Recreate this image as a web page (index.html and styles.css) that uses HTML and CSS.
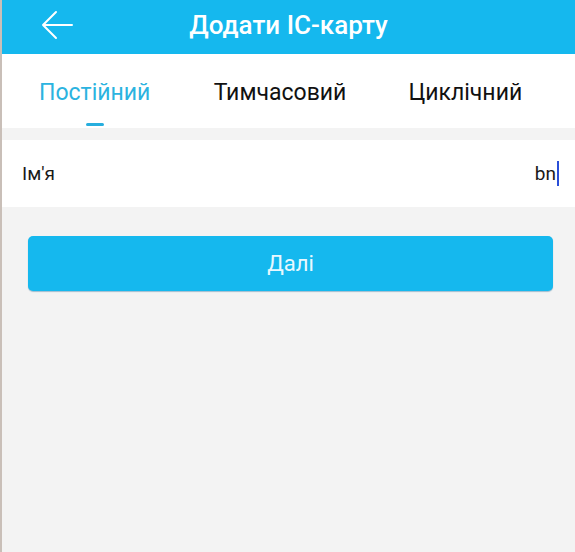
FILE: index.html
```html
<!DOCTYPE html>
<html lang="uk">
  <head>
    <meta charset="UTF-8" />
    <meta name="viewport" content="width=device-width, initial-scale=1.0" />
    <title>Додати IC-карту</title>
    <link rel="stylesheet" href="styles.css">
  </head>
  <body>
    <div class="page">
      <div class="header">
        <svg class="back" width="34" height="30" viewBox="0 0 34 30">
          <path d="M32 15 H3 M16 2 L3 15 L16 28" fill="none" stroke="#ffffff" stroke-width="2" stroke-linecap="round" stroke-linejoin="round"/>
        </svg>
        <div class="title">Додати IC-карту</div>
      </div>

      <div class="tabs">
        <div class="tab active">Постійний</div>
        <div class="tab">Тимчасовий</div>
        <div class="tab">Циклічний</div>
      </div>

      <div class="field">
        <span class="label">Ім'я</span>
        <span class="value">bn<span class="caret"></span></span>
      </div>

      <div class="actions">
        <button class="next">Далі</button>
      </div>
    </div>
  </body>
</html>
```

FILE: styles.css
```css
html, body {
  margin: 0;
  height: 100%;
}
body {
  font-family: Roboto, "Noto Sans", Arial, sans-serif;
  background-color: #f3f3f3;
}
.page {
  min-height: 100%;
  border-left: 2px solid #c9bfb8;
  box-sizing: border-box;
}
.header {
  height: 54px;
  background-color: #15b8ee;
  display: flex;
  align-items: center;
  justify-content: center;
  position: relative;
}
.back {
  position: absolute;
  left: 38px;
  top: 10px;
}
.title {
  color: #ffffff;
  font-size: 26px;
  font-weight: 500;
  margin-top: -5px;
}
.tabs {
  height: 74px;
  background-color: #ffffff;
  display: flex;
  padding-right: 17px;
}
.tab {
  flex: 1;
  text-align: center;
  font-size: 23px;
  color: #111111;
  padding-top: 25px;
  position: relative;
}
.tab.active {
  color: #2bb3e0;
}
.tab.active::after {
  content: "";
  position: absolute;
  left: 50%;
  top: 69px;
  width: 18px;
  height: 3px;
  margin-left: -9px;
  background-color: #27aede;
  border-radius: 2px;
}
.field {
  margin-top: 12px;
  height: 67px;
  background-color: #ffffff;
  display: flex;
  align-items: center;
  justify-content: space-between;
  padding: 0 16px 0 20px;
  font-size: 19px;
  color: #1a1a1a;
}
.value {
  display: flex;
  align-items: center;
}
.caret {
  width: 2px;
  height: 25px;
  background-color: #2a4fd8;
  margin-left: 1px;
}
.actions {
  padding: 29px 22px 0 26px;
}
.next {
  width: 100%;
  height: 55px;
  border: none;
  border-radius: 5px;
  background-color: #15b8ee;
  box-shadow: 0 1px 1px rgba(0, 90, 140, 0.35);
  color: #e8f8ff;
  font-family: inherit;
  font-size: 22px;
}
```
